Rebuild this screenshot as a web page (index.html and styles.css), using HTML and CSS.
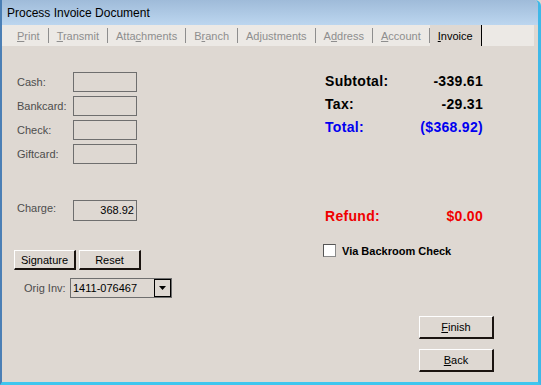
FILE: index.html
```html
<!DOCTYPE html>
<html lang="en">
<head>
  <meta charset="UTF-8" />
  <title>Process Invoice Document</title>
  <link rel="stylesheet" href="styles.css">
</head>
<body>
  <div class="window">
    <div class="titlebar">Process Invoice Document</div>

    <div class="tabs">
      <span class="tab"><u>P</u>rint</span><span class="sep"></span>
      <span class="tab"><u>T</u>ransmit</span><span class="sep"></span>
      <span class="tab">Atta<u>c</u>hments</span><span class="sep"></span>
      <span class="tab">B<u>r</u>anch</span><span class="sep"></span>
      <span class="tab">Ad<u>j</u>ustments</span><span class="sep"></span>
      <span class="tab">A<u>d</u>dress</span><span class="sep"></span>
      <span class="tab"><u>A</u>ccount</span><span class="sep"></span>
      <span class="tab active"><u>I</u>nvoice</span>
    </div>

    <div class="panel">
      <div class="left">
        <div class="tenders">
          <div class="field"><label>Cash:</label><div class="box"></div></div>
          <div class="field"><label>Bankcard:</label><div class="box"></div></div>
          <div class="field"><label>Check:</label><div class="box"></div></div>
          <div class="field"><label>Giftcard:</label><div class="box"></div></div>
        </div>

        <div class="field charge"><label>Charge:</label><div class="box">368.92</div></div>

        <div class="actions">
          <button class="btn">Signature</button>
          <button class="btn">Reset</button>
        </div>

        <div class="orig">
          <label>Orig Inv:</label>
          <div class="combo">
            <span class="combo-text">1411-076467</span>
            <span class="combo-drop"><svg width="7" height="4" viewBox="0 0 7 4"><polygon points="0,0 7,0 3.5,4" fill="#000"/></svg></span>
          </div>
        </div>
      </div>

      <div class="right">
        <div class="totals">
          <div class="row"><span>Subtotal:</span><span>-339.61</span></div>
          <div class="row"><span>Tax:</span><span>-29.31</span></div>
          <div class="row total"><span>Total:</span><span>($368.92)</span></div>
        </div>

        <div class="row refund"><span>Refund:</span><span>$0.00</span></div>

        <div class="check">
          <span class="checkbox"></span>
          <span>Via Backroom Check</span>
        </div>

        <div class="nav-buttons">
          <button class="btn wide"><u>F</u>inish</button>
          <button class="btn wide"><u>B</u>ack</button>
        </div>
      </div>
    </div>
  </div>
</body>
</html>
```

FILE: styles.css
```css
:root {
  --face: #ded8d2;
  --strip: #ece9e5;
  --text-grey: #4d4d4d;
  --tab-grey: #8e8e8e;
}

* {
  box-sizing: border-box;
  margin: 0;
  padding: 0;
}

body {
  background: var(--face);
  font-family: 'Liberation Sans', Arial, sans-serif;
  font-size: 11px;
  color: #000;
}

.window {
  width: 541px;
  height: 385px;
  display: flex;
  flex-direction: column;
  background: var(--face);
  border-left: 2px solid #4b7fb5;
  border-right: 3px solid #3fb8e8;
  border-bottom: 3px solid #3fc6ef;
  border-top-right-radius: 6px;
  overflow: hidden;
}

.titlebar {
  height: 25px;
  line-height: 26px;
  padding-left: 5px;
  font-size: 12px;
  background: linear-gradient(#9fbbd9, #bcd6ef);
}

.tabs {
  height: 21px;
  display: flex;
  align-items: center;
  padding-left: 7px;
  margin-right: 4px;
  background: var(--strip);
}
.tab {
  padding: 0 8px;
  line-height: 22px;
  color: var(--tab-grey);
}
.tab.active {
  color: #000;
  background: var(--face);
  border-right: 1px solid #000;
  height: 21px;
}
.sep {
  width: 1px;
  height: 15px;
  background: #8e8e8e;
}

.panel {
  flex: 1;
  display: flex;
}

.left {
  width: 323px;
  padding-left: 12px;
}

.tenders {
  margin-top: 26px;
  display: flex;
  flex-direction: column;
  gap: 4px;
}

.field {
  display: flex;
  align-items: center;
  height: 20px;
}
.field label {
  width: 59px;
  padding-left: 3px;
  color: var(--text-grey);
}
.box {
  width: 64px;
  height: 20px;
  border: 1px solid #6e6e6e;
  text-align: right;
  padding-right: 2px;
  line-height: 19px;
}

.charge {
  margin-top: 36px;
  height: 21px;
  align-items: flex-start;
}
.charge label {
  margin-top: 2px;
}
.charge .box {
  height: 21px;
}

.actions {
  margin-top: 29px;
  display: flex;
  gap: 3px;
}

.btn {
  font-family: inherit;
  font-size: 11px;
  color: #000;
  background: var(--face);
  border: 1px solid #fff;
  border-right: 2px solid #1a1410;
  border-bottom: 2px solid #1a1410;
  width: 62px;
  height: 20px;
  line-height: 16px;
}

.orig {
  margin-top: 8px;
  display: flex;
  align-items: center;
  padding-left: 10px;
}
.orig label {
  width: 46px;
  color: var(--text-grey);
}
.combo {
  width: 102px;
  height: 20px;
  border: 1px solid #6e6e6e;
  display: flex;
  align-items: center;
}
.combo-text {
  flex: 1;
  padding-left: 2px;
}
.combo-drop {
  width: 17px;
  height: 18px;
  border: 1px solid #000;
  display: flex;
  align-items: center;
  justify-content: center;
}

.right {
  width: 170px;
}

.totals {
  margin-top: 24px;
}
.row {
  display: flex;
  justify-content: space-between;
  height: 23px;
  line-height: 23px;
  font-size: 14px;
  font-weight: bold;
  letter-spacing: 0.3px;
  width: 158px;
}
.total {
  color: #0000f0;
}
.refund {
  margin-top: 66px;
  color: #f00000;
}

.check {
  margin-top: 16px;
  margin-left: -2px;
  display: flex;
  align-items: center;
  gap: 6px;
  font-weight: bold;
}
.checkbox {
  width: 13px;
  height: 13px;
  background: #fff;
  border: 1px solid #8a8a8a;
  border-top-color: #555;
  border-left-color: #555;
}

.nav-buttons {
  margin-top: 59px;
  margin-left: 94px;
  display: flex;
  flex-direction: column;
  gap: 10px;
}
.btn.wide {
  width: 75px;
  height: 23px;
}
```
